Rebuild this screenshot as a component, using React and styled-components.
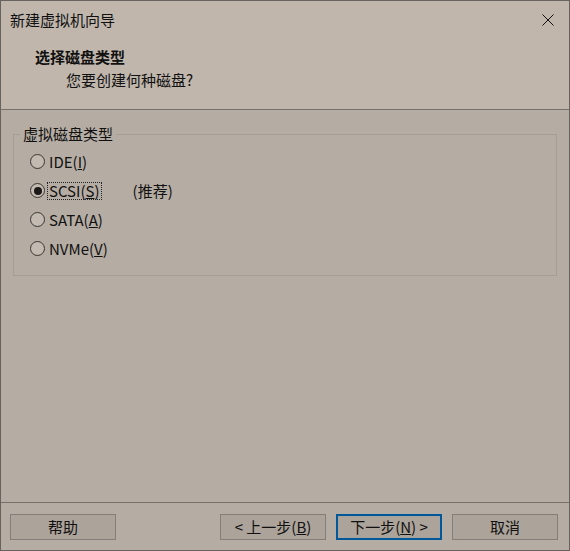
import React, { useState } from 'react'
import styled, { createGlobalStyle } from 'styled-components'

const GlobalStyle = createGlobalStyle`
  html, body {
    margin: 0;
    padding: 0;
    background: #b5aca3;
  }
  body {
    font-family: "Noto Sans CJK SC", "Noto Sans", "DejaVu Sans", sans-serif;
    font-size: 15px;
    color: #111;
  }
`

const Window = styled.div`
  width: 570px;
  height: 551px;
  box-sizing: border-box;
  border: 1px solid #67625d;
  display: flex;
  flex-direction: column;
  background: #b5aca3;
`

const TitleBar = styled.div`
  height: 38px;
  display: flex;
  align-items: center;
  justify-content: space-between;
  padding: 0 15px 0 9px;
  background: #c0b6ac;
  line-height: 20px;
`

const CloseBtn = styled.div`
  width: 12px;
  height: 12px;
  display: flex;
  align-items: center;
  justify-content: center;
`

const Header = styled.div`
  height: 71px;
  box-sizing: border-box;
  padding: 7px 0 0 0;
  background: #c0b6ac;
  border-bottom: 1px solid #77716b;
`

const Heading = styled.div`
  font-weight: bold;
  line-height: 22px;
  padding-left: 34px;
`

const SubTitle = styled.div`
  line-height: 22px;
  margin-top: 1px;
  padding-left: 65px;
`

const Body = styled.div`
  flex: 1;
  padding: 14px 12px 0 12px;
`

const Group = styled.fieldset`
  margin: 0;
  padding: 3px 0 12px 0;
  border: 1px solid #a69d94;
  min-width: 0;
`

const Legend = styled.legend`
  margin-left: 6px;
  padding: 0 3px;
  line-height: 20px;
`

const Row = styled.label`
  height: 29px;
  display: flex;
  align-items: center;
  padding-left: 16px;
`

const RadioCircle = styled.span`
  width: 15px;
  height: 15px;
  box-sizing: border-box;
  border-radius: 50%;
  border: 1px solid #3a3632;
  background: #c3bab1;
  display: flex;
  align-items: center;
  justify-content: center;
  flex-shrink: 0;
  &::after {
    content: '';
    width: 8px;
    height: 8px;
    border-radius: 50%;
    background: ${p => (p.$checked ? '#1b1917' : 'transparent')};
  }
`

const RadioText = styled.span`
  margin-left: 3px;
  padding: 0 1px;
  line-height: 16px;
  outline: ${p => (p.$focused ? '1px dotted #222' : 'none')};
  outline-offset: 0;
`

const Note = styled.span`
  margin-left: 32px;
`

const Footer = styled.div`
  height: 48px;
  box-sizing: border-box;
  border-top: 1px solid #77716b;
  padding: 11px 11px 0 9px;
  display: flex;
  gap: 10px;
`

const Button = styled.button`
  width: 106px;
  height: 26px;
  box-sizing: border-box;
  margin: 0;
  padding: 0;
  font: inherit;
  line-height: 20px;
  color: #111;
  background: #aca39a;
  border: ${p => (p.$primary ? '2px solid #00589a' : '1px solid #857e78')};
  margin-left: ${p => (p.$push ? 'auto' : '0')};
  cursor: default;
`

const options = [
  { name: 'IDE', key: 'I' },
  { name: 'SCSI', key: 'S', note: '(推荐)' },
  { name: 'SATA', key: 'A' },
  { name: 'NVMe', key: 'V' },
]

export default function App() {
  const [selected, setSelected] = useState('SCSI')

  return (
    <Window>
      <GlobalStyle />
      <TitleBar>
        <span>新建虚拟机向导</span>
        <CloseBtn>
          <svg width="12" height="12" viewBox="0 0 12 12">
            <path d="M0.5 0.5 L11.5 11.5 M11.5 0.5 L0.5 11.5" stroke="#111" strokeWidth="1" fill="none" />
          </svg>
        </CloseBtn>
      </TitleBar>
      <Header>
        <Heading>选择磁盘类型</Heading>
        <SubTitle>您要创建何种磁盘?</SubTitle>
      </Header>
      <Body>
        <Group>
          <Legend>虚拟磁盘类型</Legend>
          {options.map(o => (
            <Row key={o.name} onClick={() => setSelected(o.name)}>
              <RadioCircle $checked={selected === o.name} />
              <RadioText $focused={selected === o.name}>
                {o.name}(<u>{o.key}</u>)
              </RadioText>
              {o.note && <Note>{o.note}</Note>}
            </Row>
          ))}
        </Group>
      </Body>
      <Footer>
        <Button>帮助</Button>
        <Button $push>&lt; 上一步(<u>B</u>)</Button>
        <Button $primary>下一步(<u>N</u>) &gt;</Button>
        <Button>取消</Button>
      </Footer>
    </Window>
  )
}
